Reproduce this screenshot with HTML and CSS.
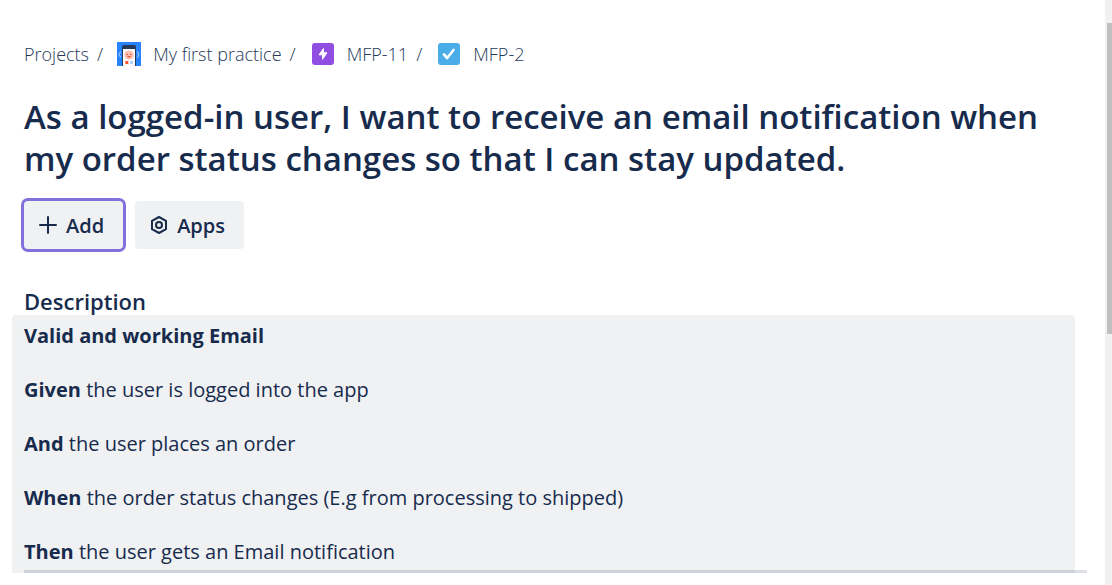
FILE: index.html
```html
<!DOCTYPE html>
<html lang="en">
<head>
<meta charset="utf-8">
<meta name="viewport" content="width=device-width, initial-scale=1">
<title>MFP-2</title>
<link rel="stylesheet" href="styles.css">
</head>
<body>
<div class="page">
<main class="issue">
  <nav class="crumbs" aria-label="Breadcrumb">
    <a href="#">Projects</a>
    <span class="slash">/</span>
    <a href="#" class="crumb crumb-project">
      <svg width="24" height="24" viewBox="0 0 24 24" aria-hidden="true">
        <path fill="#2684ff" d="M0 0h24v24H0z"/>
        <path fill="#253858" d="M5 24V5q0-2 2-2h10q2 0 2 2v19z"/>
        <path fill="#fafbfc" d="M6 24V7h12v17z"/>
        <circle cx="12" cy="13" r="4.6" fill="#ffbdad"/>
        <path stroke="#de350b" fill="none" d="M9.500 12.300h1.300M13.200 12.300h1.300M10.500 14.500q1.500 1 3 0"/>
        <path fill="#ff5630" d="M8.300 19h3v3h-3z"/>
        <path fill="#b3d4ff" d="M13 19h3v3h-3z"/>
        <path stroke="#b3d4ff" fill="none" d="M3.500 9.500Q1 12.500 3.500 15.500M20.500 9.500Q23 12.500 20.500 15.500"/>
      </svg>
      <span>My first practice</span>
    </a>
    <span class="slash">/</span>
    <a href="#" class="crumb crumb-issue">
      <svg width="22" height="22" viewBox="0 0 22 22" aria-hidden="true">
        <rect width="22" height="22" rx="3" fill="#904ee2"/>
        <path fill="#fff" stroke="#fff" stroke-linejoin="round" d="M11.500 5.500v4.300h3.500l-4.500 6.500v-4.500H7z"/>
      </svg>
      <span>MFP-11</span>
    </a>
    <span class="slash">/</span>
    <a href="#" class="crumb crumb-issue">
      <svg width="22" height="22" viewBox="0 0 22 22" aria-hidden="true">
        <rect width="22" height="22" rx="3" fill="#4bade8"/>
        <path fill="none" stroke="#fff" stroke-width="2.600" stroke-linecap="round" stroke-linejoin="round" d="M6 11.500l3.200 3.500 6.300-8"/>
      </svg>
      <span>MFP-2</span>
    </a>
  </nav>

  <h1 class="title">As a logged-in user, I want to receive an email notification when my order status changes so that I can stay updated.</h1>

  <div class="actions">
    <button type="button" class="btn btn-add">
      <svg width="18" height="18" viewBox="0 0 18 18" aria-hidden="true"><path fill="none" stroke="#172b4d" stroke-width="2" stroke-linecap="round" d="M9 1v16M1 9h16"/></svg>
      <span>Add</span>
    </button>
    <button type="button" class="btn">
      <svg width="18" height="18" viewBox="0 0 18 18" aria-hidden="true"><g fill="none" stroke="#172b4d" stroke-width="2" stroke-linejoin="round"><path d="M9 1l7 3.800v8.400L9 17l-7-3.800V4.800z"/><circle cx="9" cy="9" r="3"/></g></svg>
      <span>Apps</span>
    </button>
  </div>

  <h2 class="label">Description</h2>
  <section class="description">
    <p><strong>Valid and working Email</strong></p>
    <p><strong>Given</strong> the user is logged into the app</p>
    <p><strong>And</strong> the user places an order</p>
    <p><strong>When</strong> the order status changes (E.g from processing to shipped)</p>
    <p><strong>Then</strong> the user gets an Email notification</p>
    <div class="rule"></div>
  </section>
</main>
<div class="track" aria-hidden="true"><div class="thumb"></div></div>
</div>
</body>
</html>
```
FILE: styles.css
```css
* { box-sizing: border-box; }
body {
  margin: 0;
  background: #fff;
  color: #172b4d;
  font-family: "Open Sans", "Noto Sans", sans-serif;
  font-size: 20px;
}
.page { display: flex; min-height: 100vh; }
.issue { flex: 1; min-width: 0; padding: 40px 30px 12px 12px; }
.crumbs {
  display: flex;
  align-items: center;
  gap: 8px;
  height: 28px;
  padding-left: 12px;
  font-size: 18px;
  font-weight: 300;
  color: #253858;
}
.crumbs a { color: inherit; text-decoration: none; }
.crumb { display: flex; align-items: center; gap: 12px; }
.crumb-project { margin-left: 6px; }
.crumb-issue { margin-left: 8px; gap: 13px; }
.title {
  margin: 28px 0 0;
  padding-left: 12px;
  font-size: 33px;
  line-height: 42px;
  font-weight: 600;
}
.actions { display: flex; gap: 12px; margin-top: 21px; padding-left: 12px; }
.btn {
  display: flex;
  align-items: center;
  gap: 9px;
  height: 48px;
  padding: 0 19px 0 15px;
  border: 0;
  border-radius: 4px;
  background: #f0f1f3;
  color: inherit;
  font: 600 20px "Open Sans", "Noto Sans", sans-serif;
}
.btn-add { box-shadow: 0 0 0 3px #8270db; }
.label {
  margin: 38px 0 0;
  padding-left: 12px;
  font-size: 22px;
  line-height: 28px;
  font-weight: 600;
}
.description {
  display: flex;
  flex-direction: column;
  gap: 26px;
  padding: 7px 0 0 12px;
  border-radius: 4px 4px 0 0;
  background: #f0f1f3;
}
.description p { margin: 0; line-height: 28px; }
.rule { height: 3px; margin: -22px -12px 0 0; background: #091e4224; }
.track { width: 7px; padding: 23px 0 0 2px; background: #f1f1f1; }
.thumb { height: 311px; background: #c1c1c1; }
```
